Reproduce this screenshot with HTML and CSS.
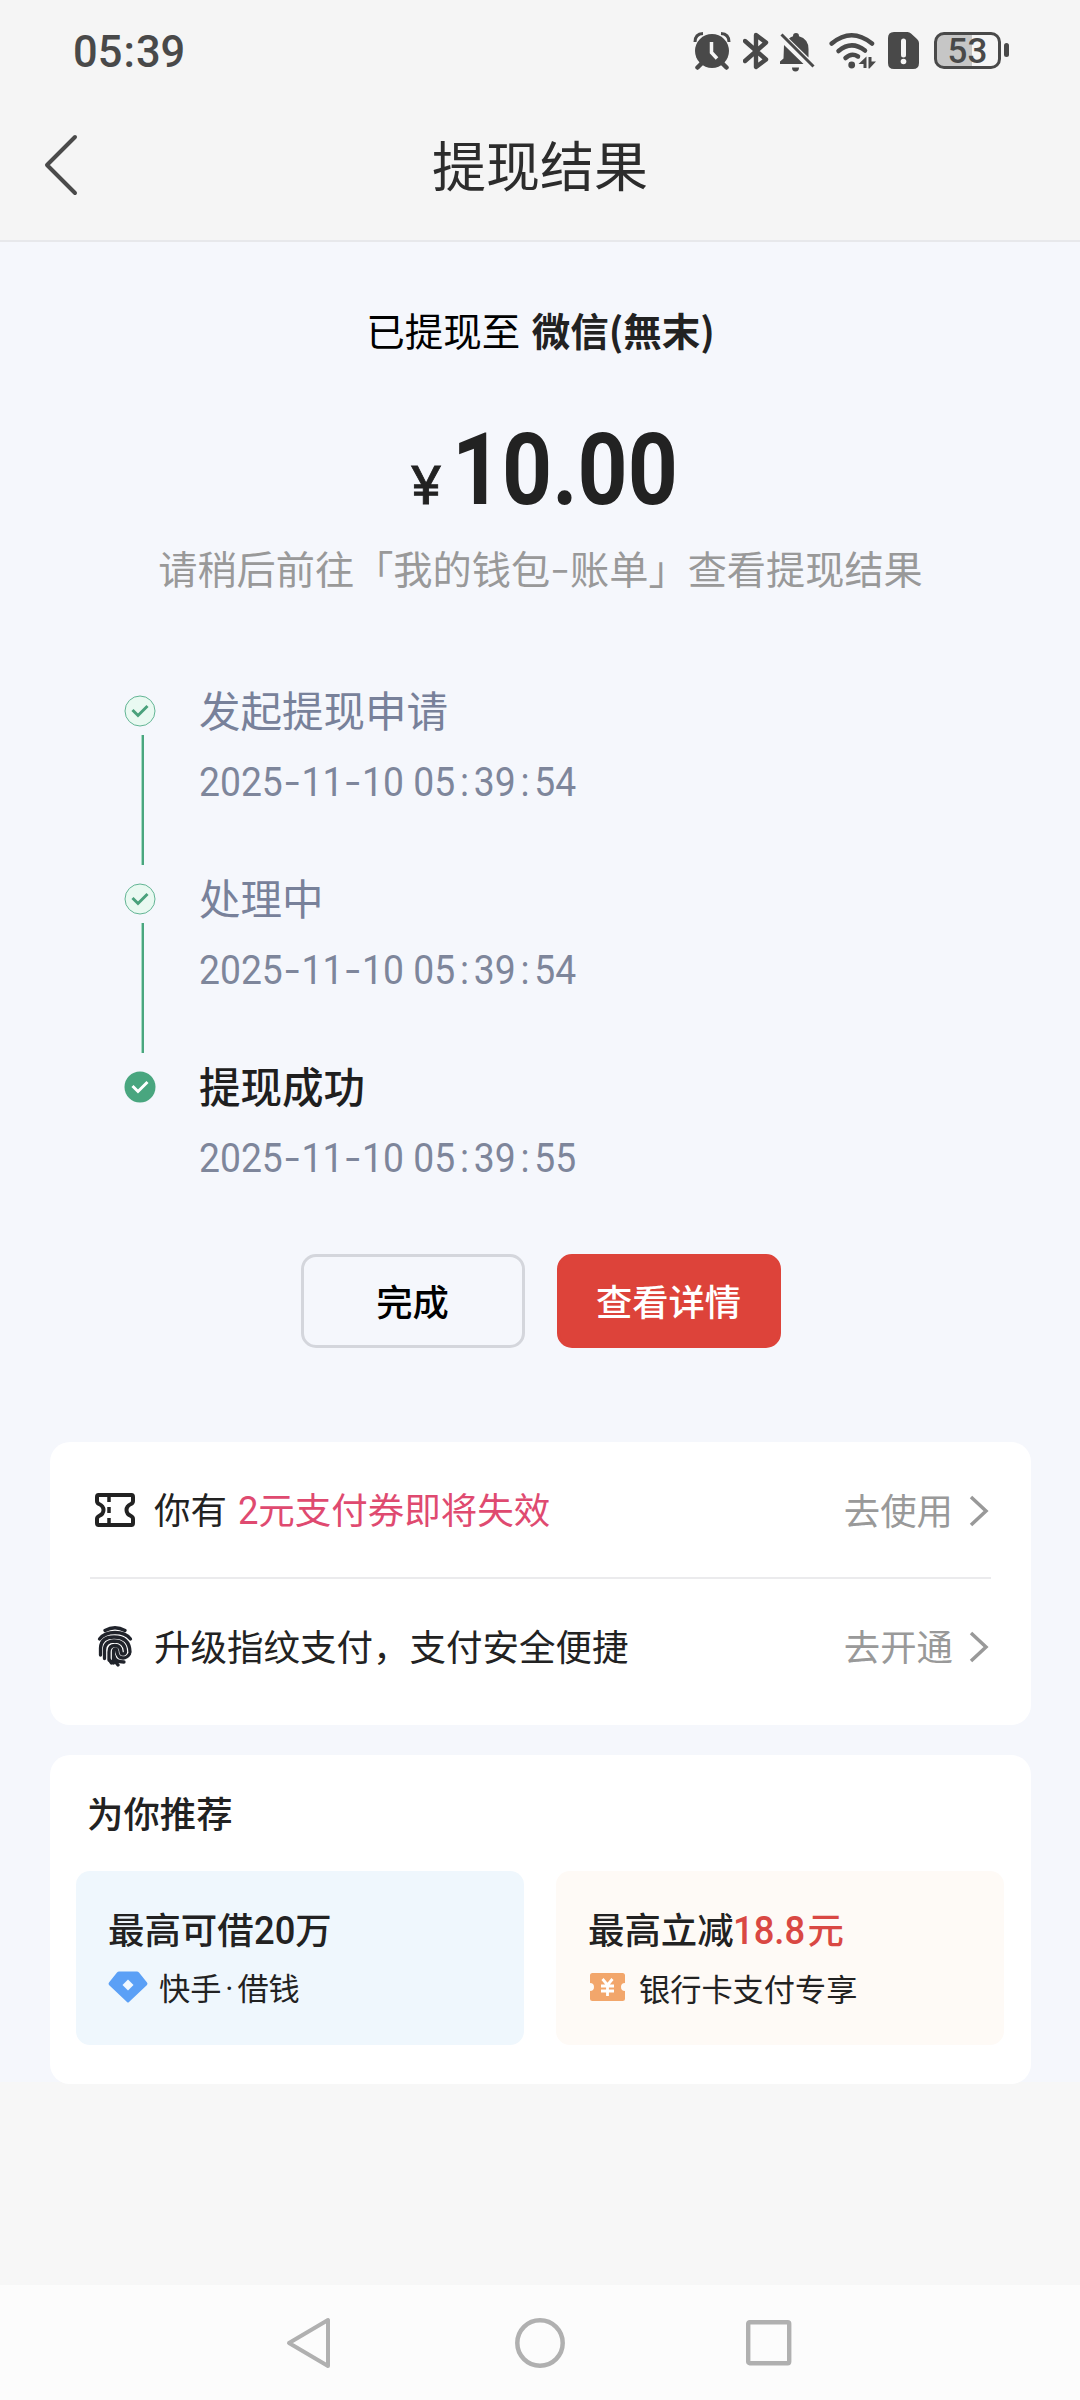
FILE: index.html
```html
<!DOCTYPE html>
<html lang="zh-CN">
<head>
<meta charset="utf-8">
<title>提现结果</title>
<link rel="stylesheet" href="styles.css">
</head>
<body>
<div class="screen">
  <div class="statusbar">
    <span class="clock">05<i class="colon">:</i>39</span>
    <div class="indicators">
      <svg class="alarm" width="38" height="38" viewBox="0 0 38 38"><circle cx="19" cy="19" r="17" fill="#494949"/><path d="M2 10Q2 2 10 1.500" fill="none" stroke="#494949" stroke-width="3"/><path d="M36 10Q36 2 28 1.500" fill="none" stroke="#494949" stroke-width="3"/><path d="M9 31L4.500 35.500M29 31L33.500 35.500" stroke="#494949" stroke-width="4.500" stroke-linecap="round"/><path d="M18.500 10V20.500L24 26.500" fill="none" stroke="#f5f5f5" stroke-width="3.500"/></svg>
      <svg class="bluetooth" width="26" height="38" viewBox="0 0 26 38"><path d="M2 9L23 27.500L13 35V3L23 10.500L2 29" fill="none" stroke="#494949" stroke-width="4.400" stroke-linejoin="round" stroke-linecap="round"/></svg>
      <svg class="bell" width="36" height="40" viewBox="0 0 36 40"><path d="M5 13L24.500 32H1V29.500L4.500 26.500ZM10 6.500Q11.500 5 14 4.200Q14 1 17 1T20 4.200Q29.500 7 29.500 17V25.500ZM13 35.500H20Q20 39.500 16.500 39.500T13 35.500Z" fill="#494949"/><path d="M2.500 2.500L34.500 34.500" stroke="#494949" stroke-width="3"/></svg>
      <svg class="wifi" width="48" height="38" viewBox="0 0 48 38"><g fill="none" stroke="#494949" stroke-width="4.500" stroke-linecap="round"><path d="M2.700 11.500Q22.500-5 43 11.500"/><path d="M9.500 19Q22.500 8 36 18.500"/><path d="M16.500 26Q22.500 20.500 29 24.500"/></g><circle cx="22.700" cy="33" r="3.400" fill="#494949"/><path d="M37.500 24.500V36H34.500V32H29.500ZM39.500 25H42.500V29.500H47L40.500 36.500H39.500Z" fill="#494949"/></svg>
      <svg class="sim" width="31" height="37" viewBox="0 0 31 37"><path d="M6 0H19.500Q21.500 0 23 1.500L29 7Q31 9 31 11V31Q31 37 25 37H6Q0 37 0 31V6Q0 0 6 0Z" fill="#494949"/><path d="M15.500 9V23" stroke="#f5f5f5" stroke-width="5" stroke-linecap="round"/><circle cx="15.500" cy="29.500" r="2.800" fill="#f5f5f5"/></svg>
      <div class="battery"><span>53</span></div>
      <div class="battery-tip"></div>
    </div>
  </div>

  <header class="navbar">
    <svg class="back" width="38" height="66" viewBox="0 0 38 66"><path d="M33 5L5 33L33 61" fill="none" stroke="#4a4a4a" stroke-width="4" stroke-linecap="round" stroke-linejoin="round"/></svg>
    <h1>提现结果</h1>
  </header>

  <main class="content">
    <p class="account">已提现至 <b>微信(無末)</b></p>
    <div class="amount"><span class="yen">¥</span><span class="value">10.00</span></div>
    <p class="hint">请稍后前往「我的钱包<span class="dash">-</span>账单」查看提现结果</p>

    <ol class="steps">
      <li>
        <div class="rail"><svg width="32" height="32" viewBox="0 0 32 32"><circle cx="16" cy="16" r="15" fill="#e9f9f1" stroke="#62b594"/><path d="M8.500 15L14 20.500L23.500 11" fill="none" stroke="#4aa17c" stroke-width="3"/></svg><i></i></div>
        <div><h2>发起提现申请</h2><time>2025<u>-</u>11<u>-</u>10<s></s>05<em>:</em>39<em>:</em>54</time></div>
      </li>
      <li>
        <div class="rail"><svg width="32" height="32" viewBox="0 0 32 32"><circle cx="16" cy="16" r="15" fill="#e9f9f1" stroke="#62b594"/><path d="M8.500 15L14 20.500L23.500 11" fill="none" stroke="#4aa17c" stroke-width="3"/></svg><i></i></div>
        <div><h2>处理中</h2><time>2025<u>-</u>11<u>-</u>10<s></s>05<em>:</em>39<em>:</em>54</time></div>
      </li>
      <li class="current">
        <div class="rail"><svg width="32" height="32" viewBox="0 0 32 32"><circle cx="16" cy="16" r="15.500" fill="#49a67f"/><path d="M8.500 15L14 20.500L23.500 11" fill="none" stroke="#fff" stroke-width="3"/></svg></div>
        <div><h2>提现成功</h2><time>2025<u>-</u>11<u>-</u>10<s></s>05<em>:</em>39<em>:</em>55</time></div>
      </li>
    </ol>

    <div class="actions">
      <button class="done">完成</button>
      <button class="detail">查看详情</button>
    </div>

    <section class="card services">
      <div class="row">
        <svg width="42" height="38" viewBox="0 0 42 38"><path d="M4.500 4H37.500Q39 4 39 6V10Q39 12 37 13Q32.500 15 32.500 19T37 25Q39 26 39 28V32Q39 34 37.500 34H4.500Q3 34 3 32V28Q3 26 5 25Q9.500 23 9.500 19T5 13Q3 12 3 10V6Q3 4 4.500 4Z" fill="none" stroke="#222" stroke-width="4"/><path d="M15 6V11M15 16V22M15 27V32" stroke="#222" stroke-width="3.500"/></svg>
        <span class="label">你有 <span class="pink"><span class="num">2</span>元支付券即将失效</span></span>
        <span class="go">去使用</span>
        <svg class="arrow" width="22" height="34" viewBox="0 0 22 34"><path d="M3 3L18 17L3 31" fill="none" stroke="#999" stroke-width="3.500"/></svg>
      </div>
      <div class="row">
        <svg width="42" height="42" viewBox="0 0 42 42"><g fill="none" stroke="#20232b" stroke-width="3.300" stroke-linecap="round"><path d="M11 5.500Q21 0 31 5.500"/><path d="M5.500 14Q10.500 7.500 21 7.500T36.500 14"/><path d="M6.500 30V23Q7 12 20 12Q35.500 12 36 27"/><path d="M10.500 33.500V25Q10.500 16.500 20 16Q31 16 31.500 26.500Q31.500 29 29 29Q27 29 27 26.500Q26.500 20.500 21 20.500Q15 20.500 15 27V35"/><path d="M15.500 35L17.500 38M19.500 38V26Q20 24 21.500 24Q23 24 23 27Q24 33 29 33Q33 33 35.500 29"/><path d="M20 31Q21 37 30 37M20 35L24 40"/></g></svg>
        <span class="label">升级指纹支付，支付安全便捷</span>
        <span class="go">去开通</span>
        <svg class="arrow" width="22" height="34" viewBox="0 0 22 34"><path d="M3 3L18 17L3 31" fill="none" stroke="#999" stroke-width="3.500"/></svg>
      </div>
    </section>

    <section class="card picks">
      <h3>为你推荐</h3>
      <div class="tiles">
        <div class="tile blue">
          <strong>最高可借<span class="num">20</span>万</strong>
          <div class="sub"><svg width="40" height="32" viewBox="0 0 40 32"><path d="M11 0.500H29Q30 0.500 31 1.500L39 11.500Q40 12.800 39 14L21 31Q20 32 19 31L1 14Q0 12.800 1 11.500L9 1.500Q10 0.500 11 0.500Z" fill="#5ba0f6"/><path d="M20 8.500L25.500 14L20 19.500L14.500 14Z" fill="#f0f8ff"/></svg><span>快手<span class="dot">·</span>借钱</span></div>
        </div>
        <div class="tile cream">
          <strong>最高立减<span class="red"><span class="num wide">18.8</span>元</span></strong>
          <div class="sub"><svg width="40" height="32" viewBox="0 0 40 32"><path d="M4.500 2H34.500Q37 2 37 4.500V12A4 4 0 0 0 37 20V27.500Q37 30 34.500 30H4.500Q2 30 2 27.500V20A4 4 0 0 0 2 12V4.500Q2 2 4.500 2Z" fill="#f2a66b"/><path d="M14.500 8L19.500 14L24.500 8M19.500 14V25M13 15H26M13 20H26" fill="none" stroke="#fff" stroke-width="2.800"/></svg><span>银行卡支付专享</span></div>
        </div>
      </div>
    </section>
  </main>

  <footer class="sysnav">
    <svg width="50" height="56" viewBox="0 0 50 56"><path d="M44 5V51L5 28Z" fill="none" stroke="#b0b0b0" stroke-width="4" stroke-linejoin="round"/></svg>
    <svg width="50" height="50" viewBox="0 0 50 50"><circle cx="25" cy="25" r="22.700" fill="none" stroke="#b0b0b0" stroke-width="4.500"/></svg>
    <svg width="46" height="46" viewBox="0 0 46 46"><rect x="2.200" y="2.200" width="41" height="41" rx="1.500" fill="none" stroke="#b0b0b0" stroke-width="4.400"/></svg>
  </footer>
</div>
</body>
</html>
```
FILE: styles.css
```css
* { box-sizing: border-box; margin: 0; padding: 0; }
body { background: #f7f7f7; font-family: "Noto Sans CJK SC", sans-serif; color: #222; }
svg { display: block; flex: none; }
i, em { font-style: normal; }
.screen { width: 1080px; height: 2400px; display: flex; flex-direction: column; background: #f7f7f7; }

.statusbar { height: 100px; background: #f5f5f5; display: flex; justify-content: space-between; padding: 0 71px 0 73px; }
.clock { font: 500 45px/103px Roboto, sans-serif; color: #494949; transform: scaleX(.965); transform-origin: left; }
.colon { display: inline-block; width: 14px; text-align: center; }
.indicators { display: flex; align-items: flex-start; padding-top: 32px; }
.bluetooth { margin-left: 12px; }
.bell { margin-left: 10px; }
.wifi { margin-left: 14px; }
.sim { margin-left: 11px; }
.battery { width: 67px; height: 37px; margin-left: 15px; border: 3px solid #494949; border-radius: 10px; background: linear-gradient(90deg, #c6c6c6 35px, #f5f5f5 35px); text-align: center; }
.battery span { font: 500 35px/34px Roboto, sans-serif; color: #494949; display: block; }
.battery-tip { width: 5px; height: 14px; margin: 11px 0 0 3px; border-radius: 3px; background: #494949; }

.navbar { height: 142px; background: #f5f5f5; border-bottom: 2px solid #e7e8eb; display: grid; grid-template-columns: 120px 1fr 120px; }
.back { margin: 32px 0 0 42px; }
h1 { text-align: center; font-weight: 400; font-size: 54px; line-height: 127px; color: #2c2c2c; }

.content { height: 1840px; background: #f5f7fc; padding: 0 49px 0 50px; }
.account { padding-top: 57px; line-height: 60px; text-align: center; font-size: 38.500px; word-spacing: 3px; color: #000; }
.account b { font-weight: 700; color: #222; }
.amount { height: 110px; margin-top: 56px; padding-left: 2px; display: flex; justify-content: center; align-items: baseline; font-family: Roboto, sans-serif; color: #222; line-height: 110px; }
.yen { font-size: 53px; font-weight: 400; margin-right: 12px; -webkit-text-stroke: .8px #222; transform: scaleX(1.080); }
.value { font-size: 101px; font-weight: 700; width: 219px; white-space: nowrap; transform: scaleX(.865); transform-origin: left; }
.hint { margin-top: 12px; line-height: 60px; text-align: center; font-size: 39.200px; color: #999; }
.dash { display: inline-block; width: 20px; text-align: center; transform: translateY(-2px) scaleX(1.400); }

.steps { list-style: none; margin-top: 84px; padding-left: 74px; }
.steps li { display: flex; height: 188px; }
.rail { width: 75px; padding-top: 14px; }
.rail i { display: block; width: 3px; height: 130px; margin: 8px 0 0 17px; background: linear-gradient(90deg, #a6dcc4 1px, #4aa67f 1px); }
.steps h2 { font-size: 41.500px; font-weight: 400; line-height: 56px; color: #78819a; }
.steps .current h2 { font-weight: 500; color: #1f1f1f; }
.steps time { display: flex; margin-top: 18px; font: 400 40px/56px Roboto, sans-serif; color: #7e869b; transform: scaleX(.932); transform-origin: left; }
.steps u, .steps em, .steps s { text-decoration: none; display: inline-block; width: 20px; text-align: center; }
.steps u { transform: scaleX(1.400); }
.steps s { width: 10px; }

.actions { display: flex; justify-content: center; gap: 32px; margin-top: 9px; }
button { width: 224px; height: 94px; padding-bottom: 3px; border-radius: 15px; font: 500 36.300px/84px "Noto Sans CJK SC", sans-serif; }
.done { border: 3px solid #d4d6dc; background: transparent; color: #000; }
.detail { border: 3px solid #dd433a; background: #dd433a; color: #fff; }

.card { background: #fff; border-radius: 20px; }
.services { height: 283px; margin-top: 94px; padding: 0 40px; }
.row { height: 137px; display: flex; align-items: center; padding: 0 1px 0 4px; }
.row:last-child { height: 133px; }
.row:first-child { border-bottom: 2px solid #ebebed; }
.row .label { flex: 1; margin-left: 18px; font-size: 36.500px; line-height: 50px; word-spacing: 3px; }
.arrow { margin-top: 2px; }
.pink { color: #df4a70; }
.num { font-family: Roboto, sans-serif; font-size: 1.08em; display: inline-block; transform: scaleX(.925); transform-origin: left; margin-right: -3px; }
.pink .num { margin-right: -2px; }
.num.wide { margin-left: -1px; }
.go { font-size: 36.400px; color: #999; line-height: 50px; margin: -2px 15px 0 0; }

.picks { height: 329px; margin-top: 30px; padding: 31px 26px 0; }
h3 { font-size: 36.400px; font-weight: 500; line-height: 52px; padding-left: 11px; }
.tiles { display: grid; grid-template-columns: 448px 448px; gap: 32px; margin-top: 33px; }
.tile { height: 174px; border-radius: 14px; padding: 32px; }
.blue { background: #eff7fd; }
.cream { background: #fefaf6; }
.tile strong { display: block; font-size: 36.400px; font-weight: 500; line-height: 50px; }
.red { color: #d94843; }
.sub { display: flex; align-items: center; height: 44px; margin-top: 10px; font-size: 31.200px; line-height: 42px; gap: 11px; white-space: nowrap; }
.sub svg { margin-top: -2px; }
.dot { display: inline-block; width: 16px; text-align: center; font-family: Roboto, sans-serif; }

.sysnav { margin-top: auto; height: 115px; background: #fcfcfc; display: flex; align-items: center; padding: 0 288px 0 284px; justify-content: space-between; }
```
